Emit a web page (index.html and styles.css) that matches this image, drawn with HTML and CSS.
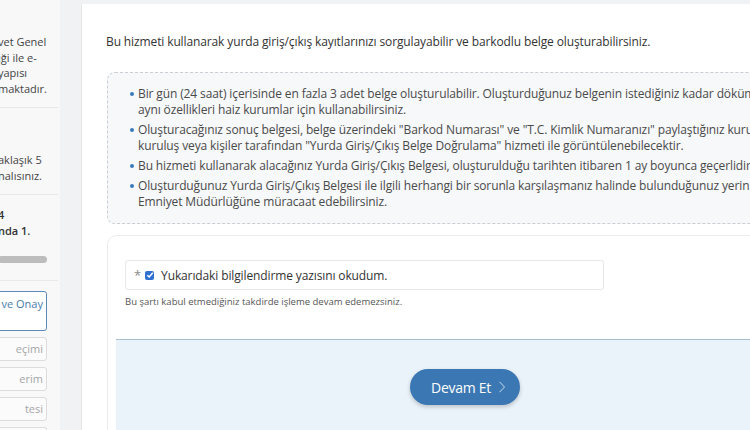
FILE: index.html
```html
<!DOCTYPE html>
<html lang="tr">
<head>
    <meta charset="UTF-8">
    <meta name="viewport" content="width=device-width, initial-scale=1.0">
    <title>Yurda Giriş/Çıkış Belgesi Sorgulama</title>
    <link rel="stylesheet" href="styles.css">
</head>
<body>
    <div class="sayfa">
        <aside class="yan">
            <div class="yan-bolum yan-aciklama">
                <div>vet Genel</div>
                <div>iği ile e-</div>
                <div>yapısı</div>
                <div>maktadır.</div>
            </div>
            <div class="yan-bolum yan-sure">
                <div>aklaşık 5</div>
                <div>nalısınız.</div>
            </div>
            <div class="yan-bolum yan-adim">
                <div>4</div>
                <div>nda 1.</div>
                <div class="ilerleme"></div>
            </div>
            <div class="adimlar">
                <div class="adim aktif">ve Onay</div>
                <div class="adim">eçimi</div>
                <div class="adim">erim</div>
                <div class="adim">tesi</div>
                <div class="adim"></div>
            </div>
        </aside>
        <main class="icerik">
            <p class="giris">Bu hizmeti kullanarak yurda giriş/çıkış kayıtlarınızı sorgulayabilir ve barkodlu belge oluşturabilirsiniz.</p>
            <div class="bilgi">
                <ul>
                    <li>Bir gün (24 saat) içerisinde en fazla 3 adet belge oluşturulabilir. Oluşturduğunuz belgenin istediğiniz kadar dökümünü alabilir ve<br>aynı özellikleri haiz kurumlar için kullanabilirsiniz.</li>
                    <li>Oluşturacağınız sonuç belgesi, belge üzerindeki "Barkod Numarası" ve "T.C. Kimlik Numaranızı" paylaştığınız kurum,<br>kuruluş veya kişiler tarafından "Yurda Giriş/Çıkış Belge Doğrulama" hizmeti ile görüntülenebilecektir.</li>
                    <li>Bu hizmeti kullanarak alacağınız Yurda Giriş/Çıkış Belgesi, oluşturulduğu tarihten itibaren 1 ay boyunca geçerlidir.</li>
                    <li>Oluşturduğunuz Yurda Giriş/Çıkış Belgesi ile ilgili herhangi bir sorunla karşılaşmanız halinde bulunduğunuz yerin İl<br>Emniyet Müdürlüğüne müracaat edebilirsiniz.</li>
                </ul>
            </div>
            <form class="kart" onsubmit="return false">
                <div class="kart-govde">
                    <label class="onay">
                        <span class="zorunlu">*</span>
                        <span class="kutu">
                            <svg width="8" height="8" viewBox="0 0 8 8"><path d="M1.3 4.2 L3.2 6 L6.8 1.8" fill="none" stroke="#fff" stroke-width="1.5"/></svg>
                        </span>
                        Yukarıdaki bilgilendirme yazısını okudum.
                    </label>
                    <p class="uyari">Bu şartı kabul etmediğiniz takdirde işleme devam edemezsiniz.</p>
                </div>
                <div class="kart-alt">
                    <button class="devam" type="submit">Devam Et
                        <svg width="8" height="12" viewBox="0 0 8 12"><path d="M1.5 0.8 L6.5 6 L1.5 11.2" fill="none" stroke="#c9dcef" stroke-width="1"/></svg>
                    </button>
                </div>
            </form>
        </main>
    </div>
</body>
</html>
```

FILE: styles.css
```css
html, body {
    margin: 0;
    height: 100%;
    overflow: hidden;
}
body {
    font-family: "Open Sans", Arial, sans-serif;
    background-color: #f1f2f4;
    color: #333;
    letter-spacing: -0.12px;
}
.sayfa {
    display: flex;
    width: 900px;
    height: 100%;
}
.yan {
    flex: none;
    width: 60px;
    background-color: #f8f8f9;
    font-size: 11px;
    line-height: 15.5px;
    color: #444;
    overflow: hidden;
    white-space: nowrap;
    letter-spacing: 0;
}
.yan-bolum {
    border-bottom: 1px solid #e8e9eb;
    margin-right: 2px;
    margin-left: -2px;
}
.yan-aciklama {
    padding: 34px 0 11px;
}
.yan-sure {
    padding: 44px 0 11px;
}
.yan-adim {
    padding: 12px 0 17px;
    color: #333;
    font-weight: 600;
}
.ilerleme {
    height: 7px;
    width: 49px;
    margin-top: 18px;
    border-radius: 4px;
    background-color: #bdbdbe;
}
.adimlar {
    padding-top: 10px;
    margin-left: -10px;
}
.adim {
    width: 57px;
    height: 24px;
    margin-bottom: 6px;
    padding: 0 3px 0 0;
    box-sizing: border-box;
    border: 1px solid #dcdcde;
    border-radius: 3px;
    text-align: right;
    line-height: 22px;
    color: #a6a6a8;
    background-color: #fbfbfb;
}
.adim.aktif {
    height: 40px;
    line-height: 24px;
    border-color: #5d8ab5;
    color: #4a7cab;
    background-color: #fff;
}
.icerik {
    flex: none;
    width: 766px;
    margin: 4px 0 0 21px;
    padding: 0 24px;
    box-sizing: border-box;
    background-color: #fff;
    border-left: 1px solid #e6e7e9;
}
.giris {
    margin: 30px 0 0;
    font-size: 12px;
    line-height: 16px;
    color: #333;
}
.bilgi {
    margin-top: 22px;
    margin-left: 1px;
    padding: 13px 0 9px 22px;
    border: 1px dashed #c9ced4;
    border-radius: 8px;
    background-color: #f6f8fa;
}
.bilgi ul {
    margin: 0;
    padding: 0;
    list-style: none;
}
.bilgi li {
    position: relative;
    padding-left: 8px;
    margin-bottom: 4px;
    font-size: 12px;
    line-height: 16px;
    color: #4a4a4a;
    white-space: nowrap;
}
.bilgi li::before {
    content: "";
    position: absolute;
    left: 0;
    top: 6px;
    width: 4px;
    height: 4px;
    border-radius: 50%;
    background-color: #3a7bbf;
}
.kart {
    margin: 11px 0 0 1px;
    border: 1px solid #ececec;
    border-radius: 10px;
    background-color: #fff;
    height: 260px;
}
.kart-govde {
    padding: 24px 17px 0;
}
.onay {
    display: flex;
    align-items: center;
    width: 479px;
    height: 30px;
    box-sizing: border-box;
    padding-left: 8px;
    border: 1px solid #e8e8e8;
    border-radius: 3px;
    font-size: 12px;
    color: #333;
}
.zorunlu {
    color: #8a8a8a;
    font-size: 13px;
    margin-right: 4px;
}
.kutu {
    display: inline-flex;
    align-items: center;
    justify-content: center;
    width: 9px;
    height: 9px;
    margin-right: 7px;
    border-radius: 2px;
    background-color: #2f6fd0;
}
.uyari {
    margin: 5px 0 0;
    font-size: 9.5px;
    line-height: 14px;
    color: #555;
    letter-spacing: 0;
}
.kart-alt {
    margin: 30px 8px 0;
    padding-top: 29px;
    height: 200px;
    border-top: 1px solid #a8bfd2;
    background-color: #eaf2fa;
    text-align: center;
}
.devam {
    display: inline-flex;
    align-items: center;
    gap: 7px;
    height: 36px;
    padding: 0 14px 0 21px;
    border: none;
    border-radius: 18px;
    background-color: #3b77b3;
    color: #fff;
    font-family: "Open Sans", Arial, sans-serif;
    font-size: 14px;
    letter-spacing: -0.3px;
    cursor: pointer;
    box-shadow: 0 2px 4px rgba(0,0,0,0.2);
}
```
